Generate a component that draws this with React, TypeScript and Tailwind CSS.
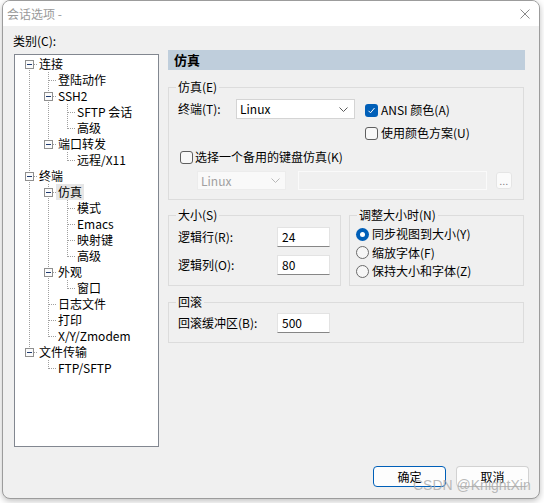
import React from 'react';

type TreeNode = {
  level: number;
  label: string;
  rails: boolean[];
  expander?: boolean;
  first?: boolean;
  last?: boolean;
  selected?: boolean;
};

const DOT = '#a0a0a0';

const tree: TreeNode[] = [
  { level: 0, label: '连接', rails: [], expander: true, first: true },
  { level: 1, label: '登陆动作', rails: [true] },
  { level: 1, label: 'SSH2', rails: [true], expander: true },
  { level: 2, label: 'SFTP 会话', rails: [true, true] },
  { level: 2, label: '高级', rails: [true, true], last: true },
  { level: 1, label: '端口转发', rails: [true], expander: true, last: true },
  { level: 2, label: '远程/X11', rails: [true, false], last: true },
  { level: 0, label: '终端', rails: [], expander: true },
  { level: 1, label: '仿真', rails: [true], expander: true, selected: true },
  { level: 2, label: '模式', rails: [true, true] },
  { level: 2, label: 'Emacs', rails: [true, true] },
  { level: 2, label: '映射键', rails: [true, true] },
  { level: 2, label: '高级', rails: [true, true], last: true },
  { level: 1, label: '外观', rails: [true], expander: true },
  { level: 2, label: '窗口', rails: [true, true], last: true },
  { level: 1, label: '日志文件', rails: [true] },
  { level: 1, label: '打印', rails: [true] },
  { level: 1, label: 'X/Y/Zmodem', rails: [true], last: true },
  { level: 0, label: '文件传输', rails: [], expander: true, last: true },
  { level: 1, label: 'FTP/SFTP', rails: [false], last: true },
];

function RailCell({ on }: { on: boolean }) {
  return (
    <svg width="19" height="16" className="block shrink-0">
      {on && <line x1="11.5" y1="0" x2="11.5" y2="16" stroke={DOT} strokeDasharray="1 1" />}
    </svg>
  );
}

function OwnCell({ first, last, expander }: { first?: boolean; last?: boolean; expander?: boolean }) {
  return (
    <svg width="19" height="16" className="block shrink-0">
      <line x1="11.5" y1={first ? 8 : 0} x2="11.5" y2={last ? 9 : 16} stroke={DOT} strokeDasharray="1 1" />
      <line x1="12" y1="8.5" x2="19" y2="8.5" stroke={DOT} strokeDasharray="1 1" />
      {expander && (
        <>
          <rect x="7.5" y="4.5" width="8" height="8" fill="#fbfbfb" stroke="#8f8f8f" />
          <line x1="9" y1="8.5" x2="14" y2="8.5" stroke="#1f3b70" />
        </>
      )}
    </svg>
  );
}

function TreeRow({ node }: { node: TreeNode }) {
  return (
    <div className="flex h-[16px] items-center">
      {node.rails.map((on, i) => (
        <RailCell key={i} on={on} />
      ))}
      <OwnCell first={node.first} last={node.last} expander={node.expander} />
      <span className={`px-[2px] leading-[16px] whitespace-nowrap ${node.selected ? 'bg-[#e6e6e6]' : ''}`}>
        {node.label}
      </span>
    </div>
  );
}

function CheckBox({ checked }: { checked?: boolean }) {
  if (checked) {
    return (
      <div className="flex h-[13px] w-[13px] shrink-0 items-center justify-center rounded-[3px] bg-[#005fb8]">
        <svg width="9" height="9" viewBox="0 0 9 9">
          <polyline points="1.5,4.8 3.5,6.8 7.5,2" fill="none" stroke="#ffffff" strokeWidth="1" />
        </svg>
      </div>
    );
  }
  return <div className="h-[13px] w-[13px] shrink-0 rounded-[3px] border border-[#5f5f5f] bg-[#f8f8f8]" />;
}

function Radio({ checked }: { checked?: boolean }) {
  if (checked) {
    return (
      <div className="flex h-[13px] w-[13px] shrink-0 items-center justify-center rounded-full bg-[#005fb8]">
        <div className="h-[5px] w-[5px] rounded-full bg-white" />
      </div>
    );
  }
  return <div className="h-[13px] w-[13px] shrink-0 rounded-full border border-[#6a6a6a] bg-[#f6f6f6]" />;
}

function Chevron({ color }: { color: string }) {
  return (
    <svg width="9" height="5" viewBox="0 0 9 5" className="block">
      <polyline points="0.5,0.5 4.5,4.5 8.5,0.5" fill="none" stroke={color} strokeWidth="1" />
    </svg>
  );
}

function TextBox({ value }: { value: string }) {
  return (
    <div className="flex h-[20px] w-[53px] items-center border border-[#e3e3e3] border-b-[#868686] bg-white pl-[4px] leading-[16px]">
      {value}
    </div>
  );
}

function Group({ legend, className, children }: { legend: string; className: string; children: React.ReactNode }) {
  return (
    <div className={`relative border border-[#dcdcdc] ${className}`}>
      <span className="absolute left-[7px] top-[-9px] bg-[#f0f0f0] px-[2px] leading-[16px] whitespace-nowrap">
        {legend}
      </span>
      {children}
    </div>
  );
}

export default function App() {
  return (
    <div className="relative h-[503px] w-[544px] overflow-hidden bg-white pl-[2px] font-['Noto_Sans_CJK_SC',sans-serif] text-[12px] text-black">
      <div className="flex h-[499px] w-[538px] flex-col overflow-hidden rounded-[8px] border border-[#9c9c9c] bg-[#f0f0f0] shadow-[0_2px_6px_rgba(0,0,0,0.25)]">
        {/* Title bar */}
        <div className="flex h-[25px] shrink-0 items-center justify-between bg-white pl-[4px] pr-[9px]">
          <span className="leading-[16px] text-[#9a9a9a]">会话选项 -</span>
          <svg width="10" height="10" viewBox="0 0 10 10">
            <path d="M0.5 0.5 L9.5 9.5 M9.5 0.5 L0.5 9.5" stroke="#8a8a8a" strokeWidth="1" />
          </svg>
        </div>

        {/* Body */}
        <div className="flex flex-1 flex-col">
          <div className="flex">
            {/* Category tree */}
            <div className="flex flex-col pl-[10px]">
              <div className="mt-[7px] leading-[16px]">类别(C):</div>
              <div className="ml-[1px] mt-[5px] h-[393px] w-[145px] border border-[#828790] bg-white pl-[3px] pt-[1px]">
                {tree.map((node, i) => (
                  <TreeRow key={i} node={node} />
                ))}
              </div>
            </div>

            {/* Settings panel */}
            <div className="ml-[9px] mt-[24px] flex flex-col">
              <div className="flex h-[20px] w-[357px] items-center bg-[#bfcedc] pl-[6px] text-[13px] font-bold">仿真</div>

              <Group legend="仿真(E)" className="mt-[17px] h-[113px] w-[356px] pl-[9px] pt-[11px]">
                <div className="flex h-[20px] items-center">
                  <span className="w-[58px] leading-[16px]">终端(T):</span>
                  <div className="flex h-[20px] w-[119px] items-center justify-between border border-[#d4d4d4] bg-white pl-[3px] pr-[6px]">
                    <span className="leading-[16px]">Linux</span>
                    <Chevron color="#5a5a5a" />
                  </div>
                  <div className="ml-[10px] mt-[2px] flex items-center gap-[3px]">
                    <CheckBox checked />
                    <span className="leading-[16px]">ANSI 颜色(A)</span>
                  </div>
                </div>
                <div className="mt-[6px] flex h-[16px] items-center gap-[3px] pl-[187px]">
                  <CheckBox />
                  <span className="leading-[16px]">使用颜色方案(U)</span>
                </div>
                <div className="mt-[8px] flex h-[16px] items-center gap-[2px] pl-[2px]">
                  <CheckBox />
                  <span className="leading-[16px]">选择一个备用的键盘仿真(K)</span>
                </div>
                <div className="mt-[6px] flex h-[19px] items-center pl-[19px]">
                  <div className="flex h-[19px] w-[89px] items-center justify-between border border-[#ececec] bg-[#f9f9f9] pl-[3px] pr-[5px] text-[#a0a0a0]">
                    <span className="leading-[16px]">Linux</span>
                    <Chevron color="#b8b8b8" />
                  </div>
                  <div className="ml-[12px] h-[19px] w-[189px] border border-[#fafafa] bg-[#f0f0f0]" />
                  <div className="ml-[9px] flex h-[17px] w-[16px] items-end justify-center rounded-[3px] border border-[#e5e5e5] bg-[#fbfbfb] pb-[2px]">
                    <span className="text-[9px] leading-[9px] tracking-[0.5px] text-[#808080]">...</span>
                  </div>
                </div>
              </Group>

              <div className="mt-[15px] flex gap-[8px]">
                <Group legend="大小(S)" className="h-[71px] w-[173px] pl-[9px] pt-[11px]">
                  <div className="flex h-[20px] items-center">
                    <span className="w-[99px] leading-[16px]">逻辑行(R):</span>
                    <TextBox value="24" />
                  </div>
                  <div className="mt-[8px] flex h-[20px] items-center">
                    <span className="w-[99px] leading-[16px]">逻辑列(O):</span>
                    <TextBox value="80" />
                  </div>
                </Group>
                <Group legend="调整大小时(N)" className="h-[71px] w-[175px] pl-[6px] pt-[9px]">
                  <div className="flex h-[18px] items-center gap-[3px]">
                    <Radio checked />
                    <span className="leading-[16px]">同步视图到大小(Y)</span>
                  </div>
                  <div className="flex h-[19px] items-center gap-[3px]">
                    <Radio />
                    <span className="leading-[16px]">缩放字体(F)</span>
                  </div>
                  <div className="flex h-[18px] items-center gap-[3px]">
                    <Radio />
                    <span className="leading-[16px]">保持大小和字体(Z)</span>
                  </div>
                </Group>
              </div>

              <Group legend="回滚" className="mt-[16px] h-[41px] w-[356px] pl-[9px] pt-[10px]">
                <div className="flex h-[20px] items-center">
                  <span className="w-[99px] leading-[16px]">回滚缓冲区(B):</span>
                  <TextBox value="500" />
                </div>
              </Group>
            </div>
          </div>

          {/* Buttons */}
          <div className="mt-[19px] flex justify-end gap-[10px] pr-[10px]">
            <button className="h-[21px] w-[73px] rounded-[4px] border border-[#005fb8] bg-[#fdfdfd] leading-[16px]">确定</button>
            <button className="h-[21px] w-[73px] rounded-[4px] border border-[#d2d2d2] border-b-[#b8b8b8] bg-[#fdfdfd] leading-[16px]">取消</button>
          </div>
        </div>
      </div>

      <div className="absolute left-[413px] top-[477px] font-['Liberation_Sans',sans-serif] text-[14px] leading-[16px] text-[#a8a8a8]/80 whitespace-nowrap">
        CSDN @KnightXin
      </div>
    </div>
  );
}
